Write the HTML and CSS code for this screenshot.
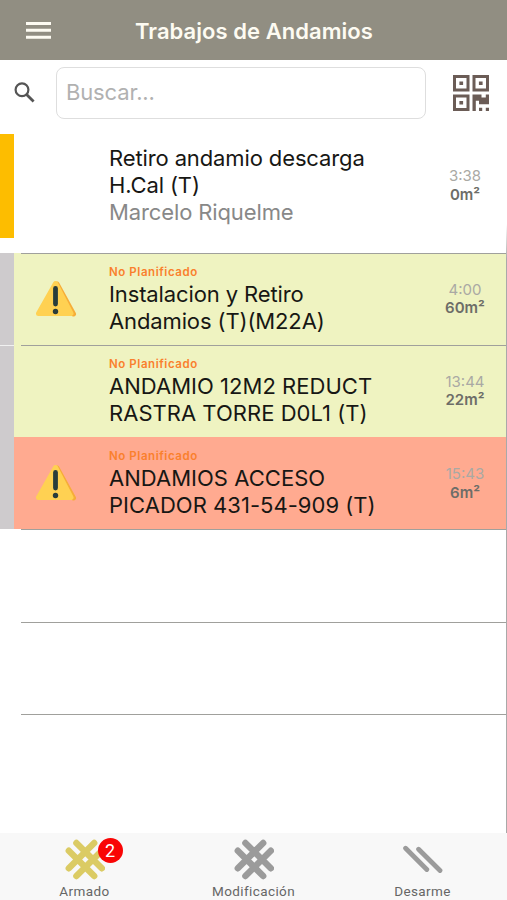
FILE: index.html
```html
<!DOCTYPE html>
<html lang="es">
<head>
<meta charset="utf-8">
<title>Trabajos de Andamios</title>
<link rel="stylesheet" href="styles.css">
</head>
<body>
<svg width="0" height="0" class="defs" aria-hidden="true">
  <symbol id="warning" viewBox="0 0 42 38">
    <path d="M22 4 L38.500 34" stroke="#f6ad38" stroke-width="5" stroke-linecap="round"/>
    <path d="M20.500 3.500 L36 33.500 H3.500 Z" fill="#ffd152" stroke="#ffd152" stroke-width="5" stroke-linejoin="round"/>
    <path d="M20.500 8.500 V24" stroke="#293c3b" stroke-width="4.800" stroke-linecap="round"/>
    <circle cx="20.500" cy="31.500" r="2.700" fill="#293c3b"/>
  </symbol>
  <symbol id="scaffold" viewBox="0 0 40 42">
    <g stroke="currentColor" stroke-width="6.400" stroke-linecap="round">
      <path d="M11.400 3.900 L36.800 29.300 M3.800 11.700 L29.200 37.100 M29.200 3.900 L3.800 29.300 M36.800 11.700 L11.400 37.100"/>
    </g>
  </symbol>
</svg>
<div class="app">
  <header class="topbar">
    <svg class="menu" viewBox="0 0 26 18"><path d="M0 2.400 H25 M0 9.300 H25 M0 16.200 H25" stroke="#fdfbf2" stroke-width="3"/></svg>
    <h1>Trabajos de Andamios</h1>
  </header>
  <div class="search">
    <svg class="glass" viewBox="0 0 22 22"><circle cx="8" cy="7.800" r="6.400" fill="none" stroke="#555" stroke-width="2.200"/><path d="M12.300 12.300 L19.600 19.600" stroke="#555" stroke-width="2.800"/></svg>
    <input type="text" placeholder="Buscar...">
    <svg class="qr" viewBox="0 0 36 36" fill="#6b5c56">
      <path fill-rule="evenodd" d="M0 0h16.500v16.500H0z M3 3v10.500h10.500V3z M19.500 0H36v16.500H19.500z M22.500 3v10.500H33V3z M0 19.500h16.500V36H0z M3 22.500V33h10.500V22.500z"/>
      <path d="M6.400 6.400h3.700v3.700H6.400z M25.900 6.400h3.700v3.700h-3.700z M6.400 25.900h3.700v3.700H6.400z M19.500 19.500h9v3h4.300v-3H36v9.700H26v-3.400h-3.200V36h-3.300z M26 32.800h3.200V36H26z M32.800 32.800H36V36h-3.200z"/>
    </svg>
  </div>
  <main class="list">
    <article class="job first">
      <div class="mark"></div>
      <div class="icon"></div>
      <div class="text"><h2>Retiro andamio descarga<br>H.Cal (T)</h2><p>Marcelo Riquelme</p></div>
      <div class="meta"><time>3:38</time><b>0m²</b></div>
    </article>
    <article class="job lime line">
      <div class="mark"></div>
      <div class="icon"><svg><use href="#warning"/></svg></div>
      <div class="text"><small>No Planificado</small><h2>Instalacion y Retiro<br>Andamios (T)(M22A)</h2></div>
      <div class="meta"><time>4:00</time><b>60m²</b></div>
    </article>
    <article class="job lime line">
      <div class="mark"></div>
      <div class="icon"></div>
      <div class="text"><small>No Planificado</small><h2 class="caps">ANDAMIO 12M2 REDUCT<br>RASTRA TORRE D0L1 (T)</h2></div>
      <div class="meta"><time>13:44</time><b>22m²</b></div>
    </article>
    <article class="job salmon">
      <div class="mark"></div>
      <div class="icon"><svg><use href="#warning"/></svg></div>
      <div class="text"><small>No Planificado</small><h2 class="caps">ANDAMIOS ACCESO<br>PICADOR 431-54-909 (T)</h2></div>
      <div class="meta"><time>15:43</time><b>6m²</b></div>
    </article>
    <div class="empty line"></div>
    <div class="empty line"></div>
    <div class="empty line"></div>
  </main>
  <nav class="tabs">
    <a class="tab active"><span class="glyph"><svg><use href="#scaffold"/></svg><i class="badge">2</i></span><span>Armado</span></a>
    <a class="tab"><span class="glyph"><svg><use href="#scaffold"/></svg></span><span>Modificación</span></a>
    <a class="tab"><span class="glyph"><svg viewBox="0 0 40 42"><path d="M2.600 9.300 L23.800 30.500 M15.600 10.300 L37 31.500" stroke="currentColor" stroke-width="4.800" stroke-linecap="round"/></svg></span><span>Desarme</span></a>
  </nav>
</div>
</body>
</html>
```
FILE: styles.css
```css
* { box-sizing: border-box; }
body { margin: 0; background: #fff; font-family: Inter, "Liberation Sans", sans-serif; }
h1, h2, p { margin: 0; font-weight: 400; }
.defs { display: block; height: 0; }
.app { width: 507px; height: 900px; display: flex; flex-direction: column; overflow: hidden; }

.topbar { height: 60px; flex: none; display: grid; grid-template-columns: 135px 1fr; align-items: center; background: #918e82; }
.menu { width: 26px; height: 18px; margin-left: 26px; }
.topbar h1 { font-size: 22px; font-weight: 600; line-height: 28px; padding-top: 1px; letter-spacing: .05px; color: #fdfbf2; white-space: nowrap; }

.search { height: 74px; flex: none; display: flex; align-items: flex-start; padding: 7px 18px 0 14px; }
.glass { width: 22px; height: 22px; margin: 15px 20px 0 0; }
.search input { width: 370px; height: 52px; padding: 0 9px 3px; border: 1px solid #dedede; border-radius: 8px; background: #fff; font: 22px Inter, sans-serif; letter-spacing: -.15px; outline: 0; }
.search input::placeholder { color: #b1b1b1; opacity: 1; }
.qr { width: 36px; height: 36px; margin: 8px 0 0 27px; }

.list { flex: 1; min-height: 0; border: solid; border-width: 0 1px 0 0; border-image: linear-gradient(#fff 13%, #a9a9a9 18%) 1; }
.job { position: relative; height: 92.300px; display: grid; grid-template-columns: 14.300px 94.700px 1fr 82px; color: #171714; }
.job.first { height: 118.500px; padding-bottom: 15px; }
.mark { background: #cecbcd; }
.first .mark { background: #fdbd00; }
.line::before { content: ""; position: absolute; left: 21px; right: 0; top: 0; height: 1px; background: #a0a09c; }
.lime { background: #eff3c1; }
.salmon { background: #ffaa90; }
.lime + .lime .mark { border-top: 1px solid #f1f1f1; }
.icon { padding: 27px 0 0 21px; }
.icon svg { display: block; width: 42px; height: 38px; }
.text { white-space: nowrap; }
.text h2 { font-size: 22px; line-height: 27px; letter-spacing: -.12px; }
.text h2.caps { letter-spacing: .03px; }
.text p { font-size: 22px; line-height: 27px; letter-spacing: -.12px; color: #888; }
.first .text { padding-top: 11px; }
.text small { display: block; height: 17px; margin-top: 11px; font-size: 11.500px; line-height: 16px; font-weight: 600; letter-spacing: .57px; color: #fa802d; }
.meta { display: flex; flex-direction: column; align-items: center; padding-top: 28px; font-size: 15px; line-height: 18.500px; color: #6d6d68; }
.first .meta { padding-top: 33px; }
.meta time { color: #aaa9a4; }
.meta b { font-weight: 600; }
.empty { position: relative; height: 92.300px; }

.tabs { height: 67px; flex: none; display: grid; grid-template-columns: repeat(3, 169px); background: #f8f8f8; color: #666; font: 400 13.500px/16px Roboto, sans-serif; letter-spacing: .4px; }
.tab { display: flex; flex-direction: column; align-items: center; padding-top: 6px; }
.glyph { position: relative; width: 40px; height: 42px; margin-bottom: 2px; color: #9b9b9b; }
.glyph svg { display: block; width: 40px; height: 42px; }
.active .glyph { color: #dbcb64; }
.badge { position: absolute; left: 33px; top: -1px; width: 25px; height: 25px; border-radius: 50%; background: #f90505; color: #fff; font: 400 18px/25px Roboto, sans-serif; letter-spacing: 0; text-align: center; }
```
